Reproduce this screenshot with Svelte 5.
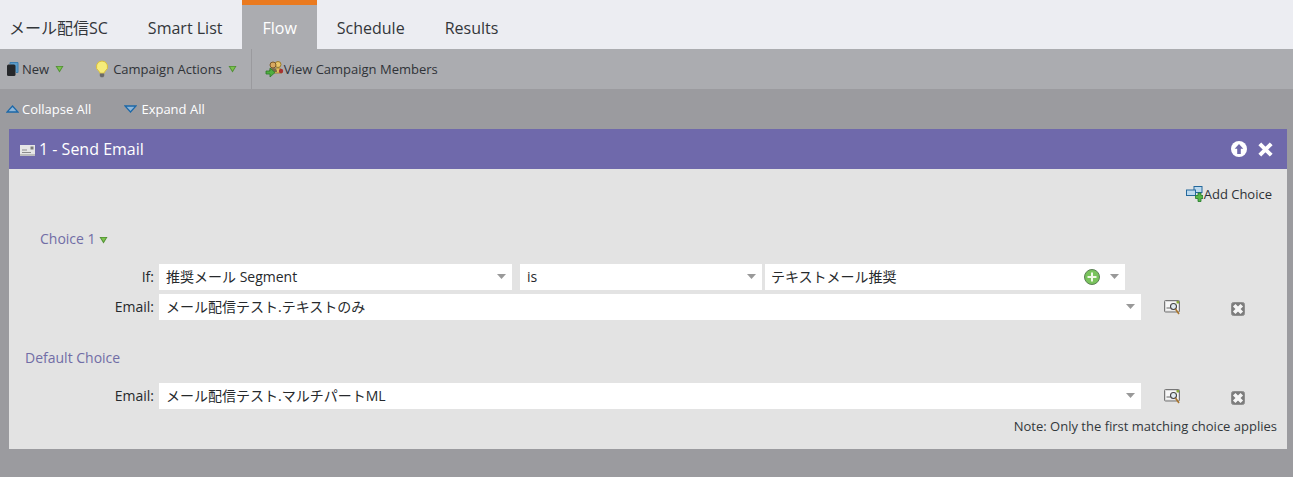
<script>
  const tabs = ["メール配信SC", "Smart List", "Flow", "Schedule", "Results"];
</script>

{#snippet tri()}
  <svg class="tri" width="9" height="8" viewBox="0 0 9 8"><path d="M.5 1h8L4.500 7.500z" fill="#4f8f32"/><path d="M2 1.800h5L4.500 5.800z" fill="#7cc24e"/></svg>
{/snippet}

{#snippet caret()}
  <svg class="caret" width="9" height="5" viewBox="0 0 9 5"><path d="M0 0h9L4.500 5z" fill="#999"/></svg>
{/snippet}

{#snippet finder()}
  <svg class="ico-btn" width="17" height="15" viewBox="0 0 17 15">
    <rect x=".5" y=".5" width="15" height="11.500" rx="1" fill="#d9d9d9" stroke="#777"/>
    <rect x="2" y="2" width="12" height="8.500" fill="#f7f7f7"/>
    <path d="M2.500 8h4" stroke="#666"/>
    <circle cx="9.500" cy="6.500" r="3" fill="#dfeaf0" stroke="#444" stroke-width="1.100"/>
    <path d="M11.500 9l3.500 5" stroke="#a9752e" stroke-width="1.600"/>
    <rect x="12.500" y="1" width="2.500" height="2.500" fill="#8aa838"/>
  </svg>
{/snippet}

{#snippet del()}
  <svg class="ico-btn" width="14" height="14" viewBox="0 0 14 14">
    <rect x=".5" y=".5" width="13" height="13" rx="2" fill="#7c7c7c" stroke="#8f8f8f"/>
    <path d="M3.200 3.200l7.600 7.600M10.800 3.200l-7.600 7.600" stroke="#f6f6f6" stroke-width="3.600"/>
  </svg>
{/snippet}

<div class="page">
  <nav class="tabs">
    {#each tabs as t}
      <div class="tab" class:active={t === "Flow"}>{t}</div>
    {/each}
  </nav>

  <div class="toolbar">
    <div class="tool new">
      <svg width="13" height="16" viewBox="0 0 13 16">
        <path d="M4 3V1.500h8v10h-2" fill="#5b9bc9" stroke="#3d7fb0"/>
        <rect x="1" y="3.500" width="8.500" height="11.500" rx="1.500" fill="#26282b"/>
      </svg>
      <span>New</span>
      {@render tri()}
    </div>
    <div class="tool actions">
      <svg width="14" height="18" viewBox="0 0 14 18">
        <path d="M7 1a5.600 5.600 0 0 0-3.200 10.200c.7.600 1 1.200 1 2h4.400c0-.8.300-1.400 1-2A5.600 5.600 0 0 0 7 1z" fill="#f6ec7a" stroke="#d9bd3e"/>
        <path d="M4.800 13.500h4.400v2.500l-1 1.200H5.800l-1-1.200z" fill="#6b6b6b"/>
      </svg>
      <span>Campaign Actions</span>
      {@render tri()}
    </div>
    <div class="sep"></div>
    <div class="tool members">
      <svg width="19" height="18" viewBox="0 0 19 18">
        <circle cx="13" cy="4.500" r="3" fill="#e8c66a" stroke="#9b7a2a"/>
        <path d="M9 13c0-4 1.500-5 4-5s4 1 4 5z" fill="#e3c060" stroke="#9b7a2a" stroke-width=".8"/>
        <circle cx="8" cy="5" r="3" fill="#d8a860" stroke="#7b5a2a"/>
        <path d="M4 12c0-3 1.500-4 4-4s4 1 4 4z" fill="#7d6a4a"/>
        <circle cx="16" cy="11" r="2.200" fill="#a83232"/>
        <path d="M1 11h4V8l5 4.500L5 17v-3H1z" fill="#4fae3f" stroke="#2c7a28" stroke-width=".8"/>
      </svg>
      <span>View Campaign Members</span>
    </div>
  </div>

  <div class="subbar">
    <div class="sub collapse">
      <svg width="13" height="8" viewBox="0 0 13 8"><path d="M6.500 1L12 7H1z" fill="#8fb6d8" stroke="#1d68a8" stroke-width="1.300"/></svg>
      <span>Collapse All</span>
    </div>
    <div class="sub">
      <svg width="13" height="8" viewBox="0 0 13 8"><path d="M1 1h11L6.500 7z" fill="#8fb6d8" stroke="#1d68a8" stroke-width="1.300"/></svg>
      <span>Expand All</span>
    </div>
  </div>

  <section class="panel">
    <header class="head">
      <svg class="mail" width="15" height="11" viewBox="0 0 15 11">
        <rect width="15" height="11" fill="#e6e6e6"/>
        <rect x="10.500" y="1.500" width="3" height="3" fill="#7a7a7a"/>
        <path d="M2 5h5M2 7.500h9" stroke="#8c8c8c"/>
        <rect y="9" width="15" height="2" fill="#bdbdbd"/>
      </svg>
      <h2>1 - Send Email</h2>
      <div class="head-btns">
        <svg width="16" height="16" viewBox="0 0 16 16"><circle cx="8" cy="8" r="8" fill="#fff"/><path d="M8 3l4.300 4.800H9.800V13H6.200V7.800H3.700z" fill="#6f69ab"/></svg>
        <svg width="15" height="15" viewBox="0 0 15 15"><path d="M1.800 1.800l11.400 11.400M13.200 1.800l-11.400 11.400" stroke="#fff" stroke-width="4"/></svg>
      </div>
    </header>

    <div class="body">
      <div class="add">
        <svg width="17" height="16" viewBox="0 0 17 16">
          <rect x="8" y=".5" width="8" height="6" fill="#bcd9ee" stroke="#24689c"/>
          <rect x=".5" y="4" width="9" height="5.500" fill="#bcd9ee" stroke="#24689c"/>
          <path d="M9.500 9.500h2.500V7h3v2.500h2v3h-2V15.500h-3v-3H9.500z" fill="#58b548" stroke="#1f7a28" stroke-width=".8"/>
        </svg>
        <span>Add Choice</span>
      </div>

      <div class="choice-title">Choice 1 {@render tri()}</div>

      <div class="row first">
        <label for="seg">If:</label>
        <div class="field seg" id="seg"><span>推奨メール Segment</span>{@render caret()}</div>
        <div class="field op"><span>is</span>{@render caret()}</div>
        <div class="field val">
          <span>テキストメール推奨</span>
          <svg class="plus" width="16" height="16" viewBox="0 0 16 16">
            <circle cx="8" cy="8" r="7.500" fill="#79c35c" stroke="#5b7f55"/>
            <path d="M8 3.500v9M3.500 8h9" stroke="#f1f8e8" stroke-width="2"/>
          </svg>
          {@render caret()}
        </div>
      </div>

      <div class="row">
        <label for="em1">Email:</label>
        <div class="field wide" id="em1"><span>メール配信テスト.テキストのみ</span>{@render caret()}</div>
        {@render finder()}
        {@render del()}
      </div>

      <div class="default-title">Default Choice</div>

      <div class="row">
        <label for="em2">Email:</label>
        <div class="field wide" id="em2"><span>メール配信テスト.マルチパートML</span>{@render caret()}</div>
        {@render finder()}
        {@render del()}
      </div>

      <p class="note">Note: Only the first matching choice applies</p>
    </div>
  </section>
</div>

<style>
  :global(body) {
    margin: 0;
    background: #9b9b9f;
  }

  .page {
    width: 1293px;
    height: 477px;
    overflow: hidden;
    background: #9b9b9f;
    font-family: "Open Sans", "Noto Sans CJK JP", sans-serif;
    font-size: 13px;
    color: #26292c;
  }

  .tabs {
    display: flex;
    height: 49px;
    background: #ecedf2;
  }

  .tab {
    padding: 0 20px;
    font-size: 16px;
    line-height: 56px;
    color: #33363a;
  }

  .tab:first-child {
    padding: 0 20px 0 9px;
  }

  .tab.active {
    background: #abacb0;
    color: #fff;
    border-top: 5px solid #ea7a1f;
    line-height: 46px;
  }

  .toolbar {
    display: flex;
    align-items: center;
    height: 40px;
    background: #abacb0;
    color: #303338;
  }

  .tool {
    display: flex;
    align-items: center;
  }

  .tool span {
    line-height: 40px;
  }

  .new {
    padding-left: 6px;
    gap: 3px;
  }

  .new .tri {
    margin-left: 3px;
  }

  .actions {
    margin-left: 31px;
    gap: 4px;
  }

  .actions .tri {
    margin-left: 2px;
  }

  .sep {
    width: 1px;
    height: 40px;
    margin-left: 14px;
    background: #9a9a9e;
  }

  .members {
    margin-left: 13px;
    gap: 0;
  }

  .subbar {
    display: flex;
    align-items: center;
    height: 40px;
    padding-left: 6px;
    gap: 33px;
    color: #fff;
  }

  .sub {
    display: flex;
    align-items: center;
    gap: 4px;
  }

  .collapse {
    gap: 3px;
  }

  .panel {
    margin-left: 9px;
    width: 1278px;
  }

  .head {
    display: flex;
    align-items: center;
    height: 40px;
    background: #6f69ab;
    color: #fff;
    padding: 0 14px 0 11px;
  }

  .mail {
    margin-right: 4px;
    margin-top: 3px;
  }

  h2 {
    margin: 0;
    font-size: 16px;
    font-weight: 400;
  }

  .head-btns {
    margin-left: auto;
    display: flex;
    align-items: center;
    gap: 11px;
  }

  .body {
    height: 280px;
    background: #e3e3e3;
    display: flex;
    flex-direction: column;
  }

  .add {
    display: flex;
    align-items: center;
    justify-content: flex-end;
    gap: 1px;
    height: 18px;
    margin-top: 16px;
    padding-right: 15px;
    color: #2e3136;
  }

  .choice-title {
    margin: 27px 0 0 31px;
    font-size: 14px;
    line-height: 18px;
    color: #716da6;
  }

  .default-title {
    margin: 29px 0 12px 16px;
    font-size: 14px;
    line-height: 18px;
    color: #716da6;
  }

  .row {
    display: flex;
    align-items: center;
    height: 26px;
    margin-top: 4px;
    font-size: 14px;
  }

  .row.first {
    margin-top: 16px;
  }

  label {
    width: 145px;
    text-align: right;
    margin: 0 5px 2px 0;
    flex: none;
  }

  .field {
    display: flex;
    align-items: center;
    height: 26px;
    background: #fff;
    padding: 0 6px 0 7px;
    box-sizing: border-box;
    flex: none;
    line-height: 24px;
  }

  .field > span {
    flex: 1;
    white-space: nowrap;
  }

  .caret {
    margin-bottom: 2px;
  }

  .seg {
    width: 353px;
  }

  .op {
    width: 242px;
    margin-left: 8px;
  }

  .val {
    width: 360px;
    margin-left: 3px;
    padding-left: 6px;
  }

  .plus {
    margin-right: 10px;
  }

  .wide {
    width: 982px;
  }

  .ico-btn {
    flex: none;
  }

  .row > svg:nth-of-type(1) {
    margin-left: 23px;
  }

  .row > svg:nth-of-type(2) {
    margin-left: 50px;
    margin-top: 3px;
  }

  .note {
    margin: 8px 10px 0 0;
    text-align: right;
    line-height: 18px;
    color: #33383c;
  }
</style>
